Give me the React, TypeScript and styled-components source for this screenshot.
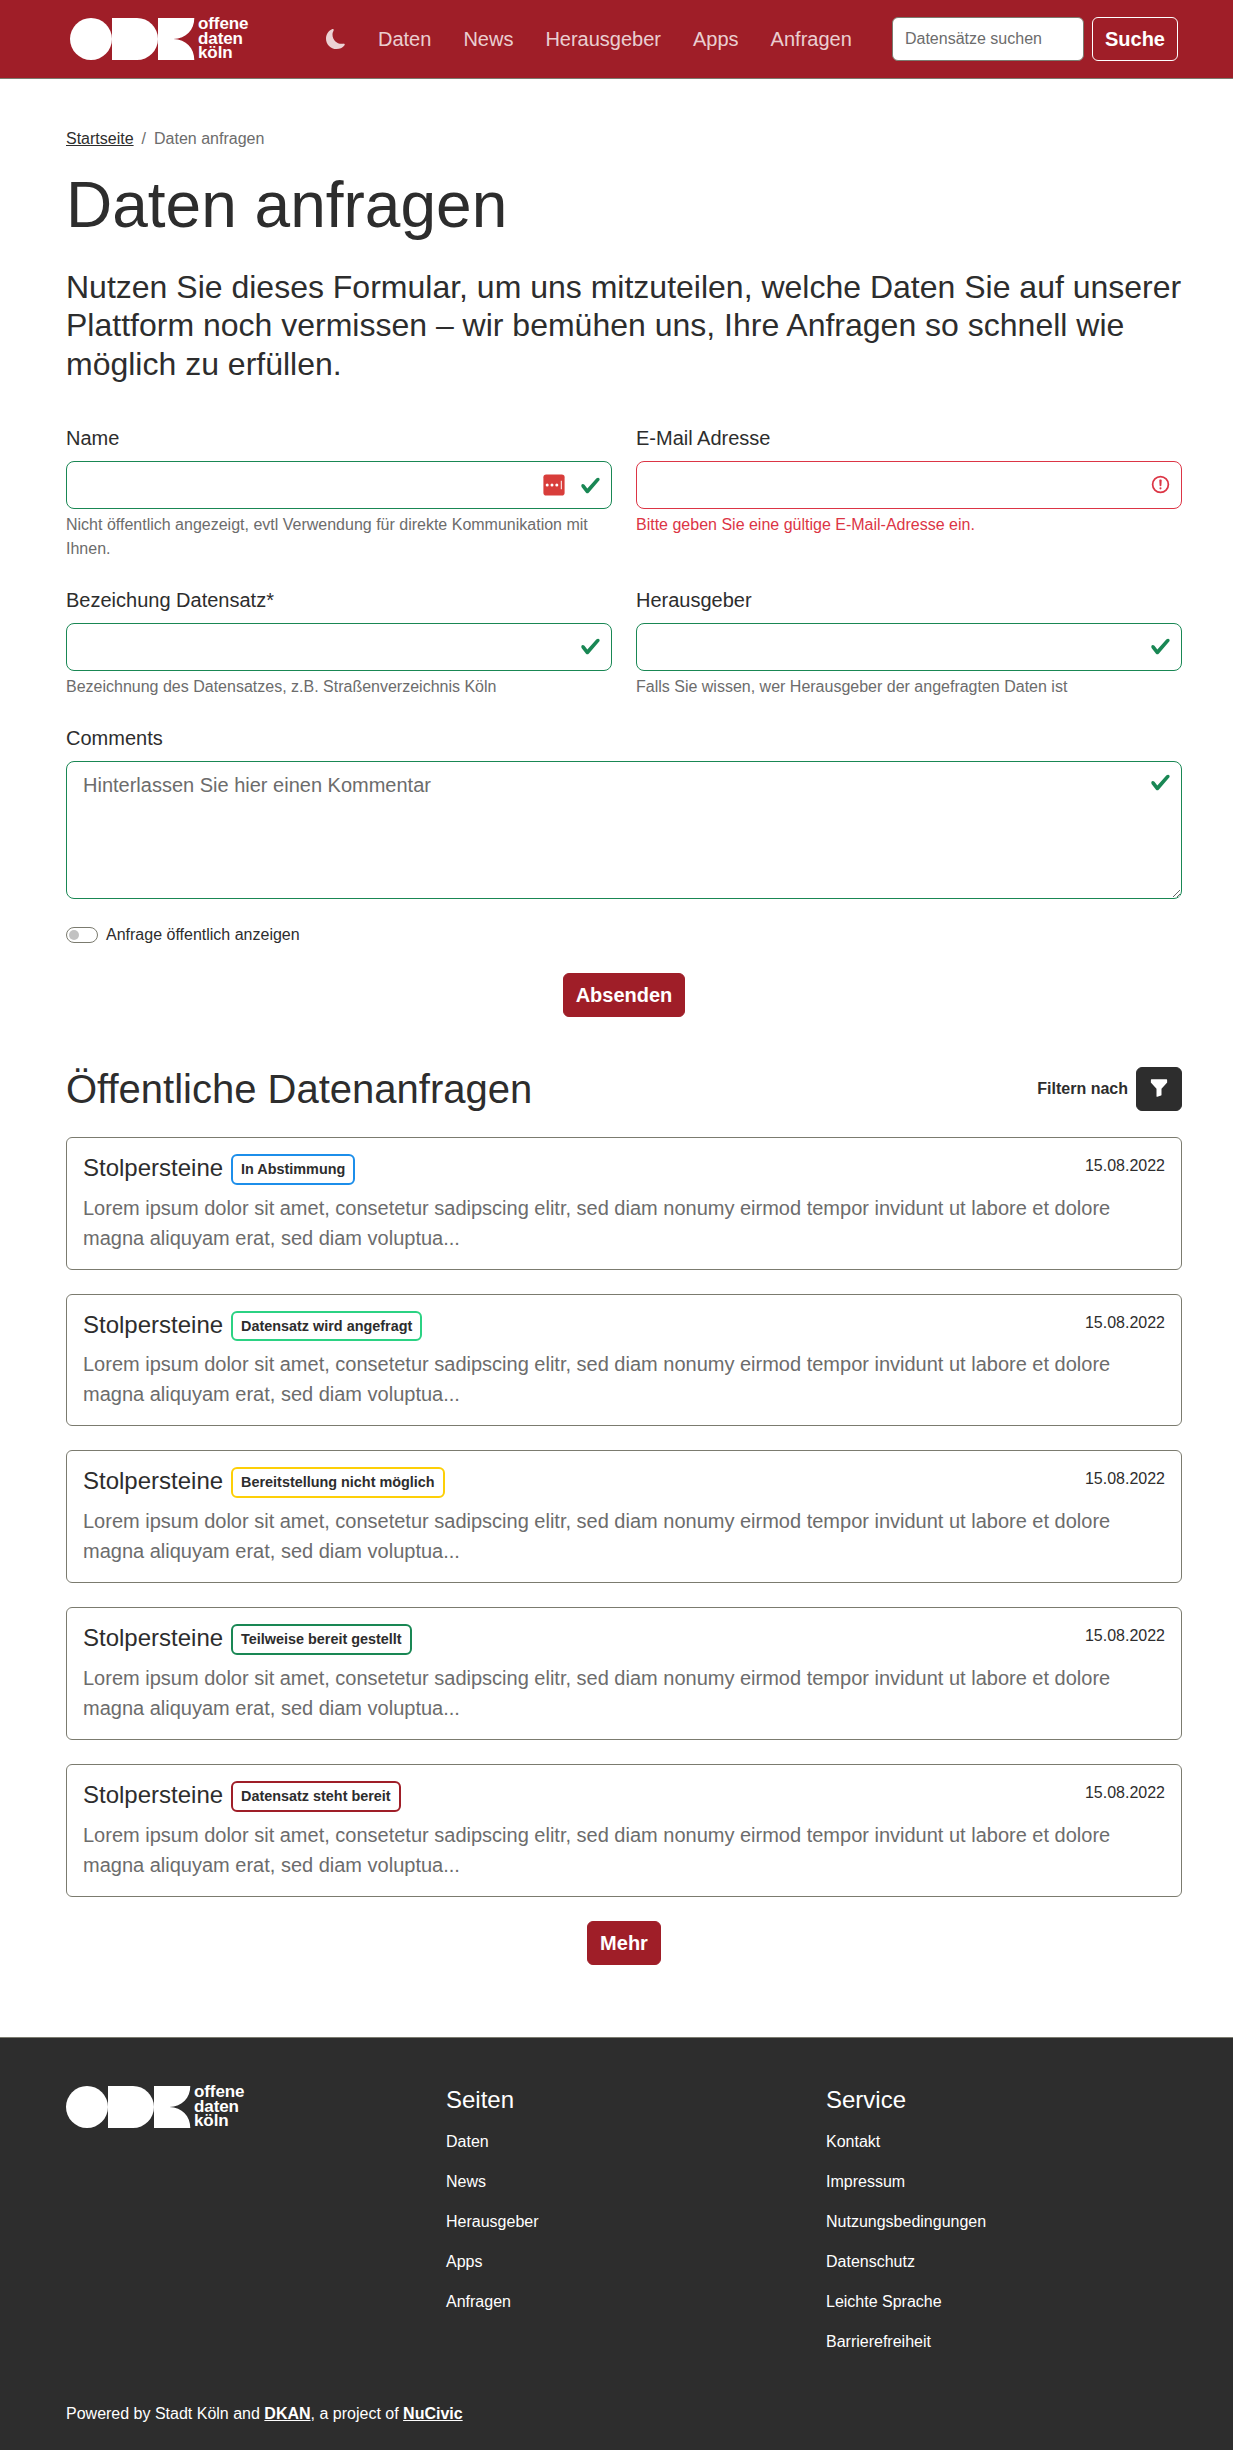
import React from "react";
import styled, { createGlobalStyle } from "styled-components";
import { BsFunnelFill, BsMoonFill } from "react-icons/bs";

const red = "#9f1e28";
const dark = "#2d2d2d";
const muted = "#6c6c6c";
const line = "#7b7b6f";
const ok = "#198754";
const bad = "#dc3545";

const GlobalStyle = createGlobalStyle`
  *, *::before, *::after { box-sizing: border-box; }
  html, body { margin: 0; padding: 0; }
  body {
    width: 1233px;
    overflow-x: hidden;
    background: #fff;
    color: ${dark};
    font: 400 20px/1.5 Arial, "Liberation Sans", sans-serif;
  }
  h1, h2, h3, p, ul { margin: 0; padding: 0; font-weight: 400; }
  ul { list-style: none; }
  a { color: inherit; text-decoration: none; }
  svg { display: block; flex: none; }
`;

const Header = styled.header`
  display: flex;
  align-items: center;
  height: 79px;
  padding: 0 55px 0 70px;
  background: ${red};
  border-bottom: 1px solid ${line};
`;

const LogoRow = styled.div`
  display: flex;
  width: 182px;
  height: 42px;
`;

const LogoWords = styled.div`
  margin: -1px 0 0 3px;
  color: #fff;
  font-size: 17px;
  font-weight: 700;
  line-height: 14.5px;
  letter-spacing: -0.1px;
`;

const Nav = styled.nav`
  display: flex;
  align-items: center;
  gap: 32px;
  margin-left: 74px;
  color: rgba(255, 255, 255, 0.8);
`;

const SearchForm = styled.form`
  display: flex;
  gap: 8px;
  margin-left: auto;
`;

const SearchInput = styled.input`
  width: 192px;
  height: 44px;
  padding: 0 12px 1px;
  border: 1px solid ${line};
  border-radius: 6px;
  background: #fff;
  font: 16px/24px Arial, "Liberation Sans", sans-serif;
  &::placeholder { color: ${muted}; opacity: 1; }
`;

const Button = styled.button<{ $line?: string; $bg?: string }>`
  display: flex;
  align-items: center;
  justify-content: center;
  height: 44px;
  padding: 0 12px;
  border: 1px solid ${(p) => p.$line ?? p.$bg ?? red};
  border-radius: 6px;
  background: ${(p) => p.$bg ?? red};
  color: #fff;
  font: 700 20px/30px Arial, "Liberation Sans", sans-serif;
`;

const IconButton = styled(Button)`
  padding-bottom: 2px;
`;

const Main = styled.main`
  width: 1116px;
  height: 1958px;
  margin-left: 66px;
  padding-top: 48px;
`;

const Breadcrumb = styled.nav`
  display: flex;
  gap: 8px;
  margin-bottom: 16px;
  color: ${muted};
  font-size: 16px;
  line-height: 24px;
`;

const Underlined = styled.a<{ $bold?: boolean }>`
  color: ${(p) => (p.$bold ? "inherit" : dark)};
  font-weight: ${(p) => (p.$bold ? 700 : 400)};
  text-decoration: underline;
`;

const Title = styled.h1`
  margin-bottom: 24px;
  font-size: 64px;
  line-height: 76.8px;
`;

const Lead = styled.p`
  margin-bottom: 40px;
  font-size: 32px;
  line-height: 38.4px;
`;

const FormGrid = styled.div`
  display: grid;
  grid-template-columns: 1fr 1fr;
  gap: 24px;
`;

const FieldBox = styled.div<{ $wide?: boolean }>`
  grid-column: ${(p) => (p.$wide ? "1 / -1" : "auto")};
`;

const Label = styled.label`
  display: block;
  margin-bottom: 8px;
`;

const ControlFrame = styled.div`
  position: relative;
`;

const Input = styled.input<{ $error?: boolean }>`
  display: block;
  width: 100%;
  height: 48px;
  padding: 8px 48px 8px 16px;
  border: 1px solid ${(p) => (p.$error ? bad : ok)};
  border-radius: 8px;
  background: #fff;
`;

const TextArea = styled.textarea`
  display: block;
  width: 100%;
  height: 138px;
  padding: 8px 48px 8px 16px;
  border: 1px solid ${ok};
  border-radius: 8px;
  font: 20px/30px Arial, "Liberation Sans", sans-serif;
  resize: vertical;
  &::placeholder { color: ${muted}; opacity: 1; }
`;

const InputIcons = styled.div<{ $top?: number }>`
  position: absolute;
  top: ${(p) => p.$top ?? 13}px;
  right: 11px;
  display: flex;
  align-items: center;
  gap: 15px;
`;

const Hint = styled.p<{ $error?: boolean }>`
  margin-top: 4px;
  color: ${(p) => (p.$error ? bad : muted)};
  font-size: 16px;
  line-height: 24px;
`;

const SwitchRow = styled.div`
  display: flex;
  align-items: center;
  gap: 8px;
  margin: 24px 0 26px;
  font-size: 16px;
  line-height: 24px;
`;

const Switch = styled.span`
  display: flex;
  align-items: center;
  width: 32px;
  height: 16px;
  padding-left: 2px;
  border: 1px solid ${line};
  border-radius: 8px;
  &::before {
    content: "";
    width: 10px;
    height: 10px;
    border-radius: 50%;
    background: #c2c2c2;
  }
`;

const Centered = styled.div`
  display: flex;
  justify-content: center;
`;

const ListHead = styled.div`
  display: flex;
  align-items: center;
  justify-content: space-between;
  margin: 48px 0 23.75px;
`;

const Subtitle = styled.h2`
  font-size: 40px;
  line-height: 48px;
`;

const Filter = styled.div`
  display: flex;
  align-items: center;
  gap: 8px;
  font-size: 16px;
  font-weight: 700;
`;

const Cards = styled.div`
  display: grid;
  gap: 24px;
  margin-bottom: 24px;
`;

const Card = styled.article`
  height: 132.75px;
  padding: 16px;
  border: 1px solid ${line};
  border-radius: 6px;
`;

const CardHead = styled.div`
  display: flex;
  align-items: flex-start;
  height: 30.75px;
  margin-bottom: 8px;
`;

const CardTitle = styled.h3`
  margin-right: 8px;
  font-size: 24px;
  line-height: 28px;
`;

const Badge = styled.span<{ $color: string }>`
  height: 30.75px;
  padding: 0 8px;
  border: 2px solid ${(p) => p.$color};
  border-radius: 6px;
  font-size: 14.4px;
  font-weight: 700;
  line-height: 26.75px;
`;

const CardDate = styled.time`
  margin-left: auto;
  font-size: 16px;
  line-height: 24px;
`;

const CardText = styled.p`
  color: ${muted};
`;

const Footer = styled.footer`
  display: flex;
  flex-direction: column;
  justify-content: space-between;
  height: 413px;
  padding: 48px 0 24px 66px;
  border-top: 1px solid ${line};
  background: ${dark};
  color: #fff;
  font-size: 16px;
  line-height: 24px;
`;

const FooterColumns = styled.div`
  display: grid;
  grid-template-columns: repeat(3, 380px);
`;

const FooterTitle = styled.h3`
  margin-bottom: 16px;
  font-size: 24px;
  line-height: 28px;
`;

const FooterLinks = styled.ul`
  display: grid;
  gap: 16px;
`;

const Logo = () => (
  <LogoRow>
    <svg width="125" height="42" viewBox="0 0 125 42" fill="#fff">
      <circle cx="21" cy="21" r="21" />
      <path d="M42 0h25a21 21 0 0 1 0 42H42z" />
      <path d="M88 0h36.300c0 12-8 20.600-21 21 13 .4 21 9 21 21H88z" />
    </svg>
    <LogoWords>
      offene
      <br />
      daten
      <br />
      köln
    </LogoWords>
  </LogoRow>
);

const Check = () => (
  <svg width="21" height="21" viewBox="0 0 8 8" fill={ok}>
    <path d="M2.300 6.730.600 4.530c-.400-1.040.460-1.400 1.100-.800l1.100 1.400 3.400-3.800c.600-.630 1.600-.270 1.200.700l-4 4.600c-.430.500-.800.400-1.100.100z" />
  </svg>
);

const ErrorIcon = () => (
  <svg width="21" height="21" viewBox="0 0 12 12" fill="none" stroke={bad}>
    <circle cx="6" cy="6" r="4.5" />
    <path strokeLinejoin="round" d="M5.8 3.600h.4L6 6.500z" />
    <circle cx="6" cy="8.200" r=".6" fill={bad} stroke="none" />
  </svg>
);

const PasswordIcon = () => (
  <svg width="22" height="22" viewBox="0 0 22 22">
    <rect x=".4" y=".4" width="21.200" height="21.200" rx="2.800" fill="#d83d3a" />
    <g fill="#fff">
      <circle cx="4.200" cy="11" r="1.500" />
      <circle cx="9" cy="11" r="1.500" />
      <circle cx="13.800" cy="11" r="1.500" />
      <path d="M17.800 6.800h1v8.400h-1z" />
    </g>
  </svg>
);

type FieldProps = { label: string; hint: string; error?: boolean; children?: React.ReactNode };

const Field = ({ label, hint, error, children }: FieldProps) => (
  <FieldBox>
    <Label>{label}</Label>
    <ControlFrame>
      <Input $error={error} aria-label={label} />
      <InputIcons>
        {children}
        {error ? <ErrorIcon /> : <Check />}
      </InputIcons>
    </ControlFrame>
    <Hint $error={error}>{hint}</Hint>
  </FieldBox>
);

const pages = ["Daten", "News", "Herausgeber", "Apps", "Anfragen"];
const services = ["Kontakt", "Impressum", "Nutzungsbedingungen", "Datenschutz", "Leichte Sprache", "Barrierefreiheit"];

const requests = [
  { status: "In Abstimmung", color: "#1c8eea" },
  { status: "Datensatz wird angefragt", color: "#2bd283" },
  { status: "Bereitstellung nicht möglich", color: "#fdcf07" },
  { status: "Teilweise bereit gestellt", color: ok },
  { status: "Datensatz steht bereit", color: red },
];

const LinkColumn = ({ title, links }: { title: string; links: string[] }) => (
  <div>
    <FooterTitle>{title}</FooterTitle>
    <FooterLinks>
      {links.map((l) => (
        <li key={l}>
          <a href="#">{l}</a>
        </li>
      ))}
    </FooterLinks>
  </div>
);

export default function App() {
  return (
    <>
      <GlobalStyle />
      <Header>
        <Logo />
        <Nav>
          <BsMoonFill size={20} />
          {pages.map((p) => (
            <a href="#" key={p}>
              {p}
            </a>
          ))}
        </Nav>
        <SearchForm>
          <SearchInput placeholder="Datensätze suchen" />
          <Button type="button" $line="#fff">
            Suche
          </Button>
        </SearchForm>
      </Header>
      <Main>
        <Breadcrumb>
          <Underlined href="#">Startseite</Underlined>
          <span>/</span>
          <span>Daten anfragen</span>
        </Breadcrumb>
        <Title>Daten anfragen</Title>
        <Lead>
          Nutzen Sie dieses Formular, um uns mitzuteilen, welche Daten Sie auf unserer Plattform noch vermissen – wir
          bemühen uns, Ihre Anfragen so schnell wie möglich zu erfüllen.
        </Lead>
        <FormGrid>
          <Field label="Name" hint="Nicht öffentlich angezeigt, evtl Verwendung für direkte Kommunikation mit Ihnen.">
            <PasswordIcon />
          </Field>
          <Field label="E-Mail Adresse" hint="Bitte geben Sie eine gültige E-Mail-Adresse ein." error />
          <Field label="Bezeichung Datensatz*" hint="Bezeichnung des Datensatzes, z.B. Straßenverzeichnis Köln" />
          <Field label="Herausgeber" hint="Falls Sie wissen, wer Herausgeber der angefragten Daten ist" />
          <FieldBox $wide>
            <Label>Comments</Label>
            <ControlFrame>
              <TextArea placeholder="Hinterlassen Sie hier einen Kommentar" />
              <InputIcons $top={11}>
                <Check />
              </InputIcons>
            </ControlFrame>
          </FieldBox>
        </FormGrid>
        <SwitchRow>
          <Switch />
          Anfrage öffentlich anzeigen
        </SwitchRow>
        <Centered>
          <Button type="button">Absenden</Button>
        </Centered>
        <ListHead>
          <Subtitle>Öffentliche Datenanfragen</Subtitle>
          <Filter>
            Filtern nach
            <IconButton type="button" $bg={dark} aria-label="Filter">
              <BsFunnelFill size={20} />
            </IconButton>
          </Filter>
        </ListHead>
        <Cards>
          {requests.map((r) => (
            <Card key={r.status}>
              <CardHead>
                <CardTitle>Stolpersteine</CardTitle>
                <Badge $color={r.color}>{r.status}</Badge>
                <CardDate>15.08.2022</CardDate>
              </CardHead>
              <CardText>
                Lorem ipsum dolor sit amet, consetetur sadipscing elitr, sed diam nonumy eirmod tempor invidunt ut
                labore et dolore magna aliquyam erat, sed diam voluptua...
              </CardText>
            </Card>
          ))}
        </Cards>
        <Centered>
          <Button type="button">Mehr</Button>
        </Centered>
      </Main>
      <Footer>
        <FooterColumns>
          <Logo />
          <LinkColumn title="Seiten" links={pages} />
          <LinkColumn title="Service" links={services} />
        </FooterColumns>
        <p>
          Powered by Stadt Köln and{" "}
          <Underlined $bold href="#">
            DKAN
          </Underlined>
          , a project of{" "}
          <Underlined $bold href="#">
            NuCivic
          </Underlined>
        </p>
      </Footer>
    </>
  );
}
